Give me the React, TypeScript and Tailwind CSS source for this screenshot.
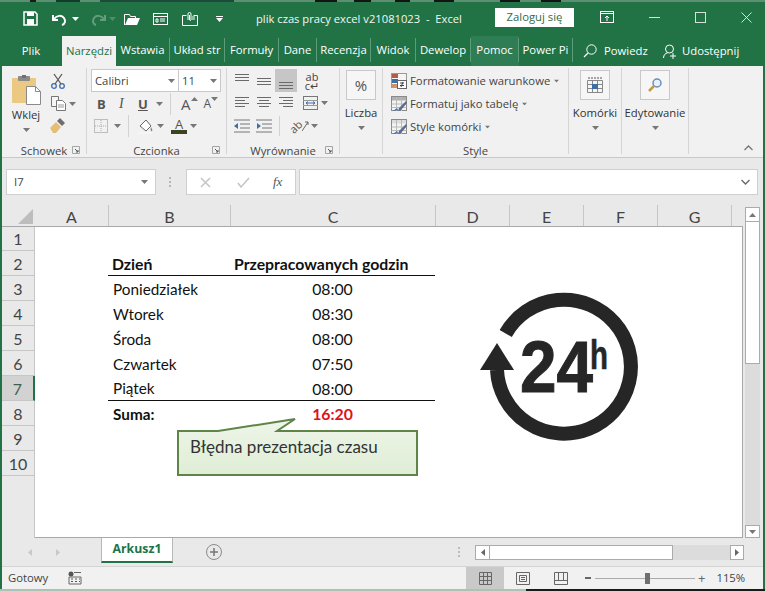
import type { ReactNode } from "react";

const ui = "font-['Open_Sans',sans-serif]";
const cell = "font-['Lato',sans-serif]";

function Caret({ className = "" }: { className?: string }) {
  return (
    <svg width="7" height="4" viewBox="0 0 7 4" className={className}>
      <path d="M0 0h7L3.5 4z" fill="#777" />
    </svg>
  );
}

function Ico({ w = 16, h = 16, children }: { w?: number; h?: number; children: ReactNode }) {
  return (
    <svg width={w} height={h} viewBox={`0 0 ${w} ${h}`} fill="none" className="shrink-0">
      {children}
    </svg>
  );
}

function Lines({ rows }: { rows: [number, number][] }) {
  return (
    <Ico w={16} h={14}>
      {rows.map(([x, w], i) => (
        <rect key={i} x={x} y={1 + i * 3} width={w} height="1" fill="#6a6a6a" />
      ))}
    </Ico>
  );
}

function Launcher() {
  return (
    <svg width="8" height="8" viewBox="0 0 8 8" fill="none">
      <path d="M0.5 0.5h7v7h-7z" stroke="#a5a5a5" />
      <path d="M3 3l3 3M6 4v2H4" stroke="#555" />
    </svg>
  );
}

function Sep({ className = "h-[22px]" }: { className?: string }) {
  return <div className={`w-px bg-[#d2d2d2] ${className}`} />;
}

function Group({ w, label, launcher, children }: { w: string; label?: string; launcher?: boolean; children: ReactNode }) {
  return (
    <div className={`${w} mt-[2px] mb-[3px] flex flex-col border-r border-[#d6d6d6]`}>
      <div className="min-h-0 flex-1">{children}</div>
      <div className="relative h-[14px] text-center text-[11.3px] leading-[21px] text-[#444]">
        {label}
        {launcher && (
          <span className="absolute top-[6px] right-[6px] flex">
            <Launcher />
          </span>
        )}
      </div>
    </div>
  );
}

function BigBox({ w, label, children }: { w: string; label: string; children: ReactNode }) {
  return (
    <Group w={w}>
      <div className="flex flex-col items-center pt-[2px]">
        <div className="flex size-[30px] items-center justify-center border border-[#c9c9c9] bg-[#f6f6f6]">{children}</div>
        <div className="mt-[5px] text-[11.3px] leading-[16px] whitespace-nowrap text-[#333]">{label}</div>
        <Caret className="mt-[5px]" />
      </div>
    </Group>
  );
}

function TableIcon({ top = "#b0b0b0" }: { top?: string }) {
  return (
    <Ico w={16} h={16}>
      <rect x="0.5" y="0.5" width="15" height="14" fill="#f4f4f4" stroke="#8a8a8a" />
      <rect x="1" y="1" width="14" height="3.5" fill={top} />
      <path d="M0.500 8h15M0.500 11.500h15M5.500 1v14M10.500 1v14" stroke="#b9b9b9" />
      <path d="M15 5L8 12l-1 3 3-1 6-7z" fill="#5b6c8c" />
      <path d="M2 15l4-3 1 2z" fill="#3f6fb5" />
    </Ico>
  );
}

function Clipboard() {
  return (
    <Ico w={30} h={30}>
      <rect x="1" y="3" width="24" height="25" rx="1" fill="#ecc982" />
      <rect x="7" y="1" width="12" height="5" rx="1" fill="#8a8a8a" />
      <rect x="11" y="0" width="4" height="3" fill="#707070" />
      <path d="M15.500 11.500h9l5 5v13h-14z" fill="#fff" stroke="#8a8a8a" />
      <path d="M24.500 11.500v5h5" stroke="#8a8a8a" />
    </Ico>
  );
}

function Scissors() {
  return (
    <Ico w={16} h={16}>
      <path d="M4 1l7 10M12 1L5 11" stroke="#5a5a5a" strokeWidth="1.300" />
      <circle cx="4" cy="13" r="2.300" stroke="#3d6ea8" strokeWidth="1.300" />
      <circle cx="12" cy="13" r="2.300" stroke="#3d6ea8" strokeWidth="1.300" />
    </Ico>
  );
}

function CopyIcon() {
  return (
    <Ico w={16} h={15}>
      <path d="M1.500 0.500h7v10h-7z" fill="#f6f6f6" stroke="#777" />
      <path d="M6.500 4.500h6l3 3v7h-9z" fill="#fff" stroke="#777" />
      <path d="M8 9h6M8 11h6" stroke="#999" />
    </Ico>
  );
}

function Painter() {
  return (
    <Ico w={16} h={15}>
      <path d="M0 10l6-6 5 5-5 6H3z" fill="#e5bd74" />
      <path d="M7 3l3-3 5 5-3 3z" fill="#6e6e6e" />
    </Ico>
  );
}

function Schowek() {
  return (
    <Group w="w-[85px]" label="Schowek" launcher>
      <div className="flex pt-[5px] pl-[9px]">
        <div className="flex w-[30px] flex-col items-center pt-[2px]">
          <Clipboard />
          <span className="text-[11.3px] leading-[20px] text-[#333]">Wklej</span>
          <Caret className="mt-[3px]" />
        </div>
        <div className="ml-[9px] flex flex-col gap-[7px]">
          <Scissors />
          <div className="flex items-center gap-[3px]">
            <CopyIcon />
            <Caret />
          </div>
          <Painter />
        </div>
      </div>
    </Group>
  );
}

function Czcionka() {
  return (
    <Group w="w-[140px]" label="Czcionka" launcher>
      <div className="flex flex-col pt-[1px] pl-[4px]">
        <div className="flex h-[23px] text-[11.3px] leading-[21px] text-[#444]">
          <div className="flex w-[88px] items-center justify-between border border-[#c9c9c9] bg-white px-[3px]">
            Calibri
            <Caret />
          </div>
          <div className="flex w-[42px] items-center justify-between border border-l-0 border-[#c9c9c9] bg-white px-[3px]">
            11
            <Caret />
          </div>
        </div>
        <div className="mt-[2px] flex h-[20px] items-center text-[#555]">
          <span className="w-[22px] pl-[6px] text-[13px] leading-none font-bold">B</span>
          <span className="w-[22px] pl-[6px] font-['Liberation_Serif',serif] text-[14px] leading-none italic">I</span>
          <span className="w-[16px] pl-[3px] text-[13px] leading-none font-bold underline">U</span>
          <Caret className="ml-[5px]" />
          <Sep className="ml-[7px] h-[22px]" />
          <span className="ml-[10px] text-[15px] leading-none">A</span>
          <Caret className="mb-[11px] rotate-180" />
          <span className="ml-[6px] text-[12px] leading-none">A</span>
          <Caret className="mb-[11px]" />
        </div>
        <div className="mt-[1px] flex h-[22px] items-center">
          <div className="ml-[3px]">
            <Ico w={14} h={14}>
              <rect x="0.500" y="0.500" width="13" height="13" stroke="#888" strokeDasharray="1 1" />
              <path d="M7 1v12M1 7h12" stroke="#aaa" strokeDasharray="1 1" />
            </Ico>
          </div>
          <Caret className="ml-[6px]" />
          <Sep className="ml-[7px] h-[22px]" />
          <div className="ml-[9px]">
            <Ico w={16} h={16}>
              <path d="M2 8l6-6 5 6-5 5z" fill="#fff" stroke="#666" />
              <path d="M13 9c1 2 2 3 1 4s-2-1-1-4z" fill="#888" />
              <path d="M0 14h14v2H0z" fill="#f5f5f5" />
            </Ico>
          </div>
          <Caret className="ml-[3px]" />
          <span className="ml-[7px] flex flex-col items-center text-[13px] leading-[12px] text-[#555]">
            A<span className="h-[4px] w-[16px] bg-[#3d4220]" />
          </span>
          <Caret className="ml-[3px]" />
        </div>
      </div>
    </Group>
  );
}

const full: [number, number][] = [
  [1, 14],
  [1, 14],
  [1, 14],
];

function Wyrownanie() {
  return (
    <Group w="w-[113px]" label="Wyrównanie" launcher>
      <div className="grid grid-cols-[22px_22px_22px_30px] grid-rows-[23px_22px_24px] items-center justify-items-center pt-[1px] pl-[4px]">
        <div className="self-start pt-[4px]">
          <Lines rows={full} />
        </div>
        <div className="self-start pt-[8px]">
          <Lines rows={full} />
        </div>
        <div className="flex h-[23px] w-[22px] items-start justify-center bg-[#c6c6c6] pt-[12px]">
          <Lines rows={full} />
        </div>
        <div className="pt-[1px] text-center text-[11px] leading-[9px] text-[#444]">
          ab
          <br />c↵
        </div>
        <Lines rows={[[1, 14], [1, 10], [1, 14], [1, 10]]} />
        <Lines rows={[[1, 14], [3, 10], [1, 14], [3, 10]]} />
        <Lines rows={[[1, 14], [5, 10], [1, 14], [5, 10]]} />
        <div className="flex items-center gap-[3px] justify-self-start pl-[6px]">
          <Ico w={15} h={14}>
            <rect x="0.500" y="0.500" width="14" height="13" stroke="#777" />
            <path d="M0 4.500h15M0 9.500h15" stroke="#999" />
            <path d="M3 7h9M3 7l2-1.500M3 7l2 1.500M12 7l-2-1.500M12 7l-2 1.500" stroke="#3d6ea8" />
          </Ico>
          <Caret />
        </div>
        <Ico w={16} h={14}>
          <path d="M6 5h10M6 9h10M0 1h16M0 13h16" stroke="#777" />
          <path d="M0 7l4-3v6z" fill="#3d6ea8" />
        </Ico>
        <Ico w={16} h={14}>
          <path d="M6 5h10M6 9h10M0 1h16M0 13h16" stroke="#777" />
          <path d="M5 7L1 4v6z" fill="#3d6ea8" />
        </Ico>
        <div className="flex items-center justify-self-start pl-[4px] [grid-column:3/5]">
          <Sep className="h-[20px]" />
          <span className="ml-[9px] -rotate-45 text-[11px] leading-none text-[#555]">ab</span>
          <Ico w={7} h={10}>
            <path d="M0 10L6 1M3 1h3v3" stroke="#666" />
          </Ico>
          <Caret className="ml-[2px]" />
        </div>
      </div>
    </Group>
  );
}

function Styl() {
  const rows: [string, ReactNode][] = [
    [
      "Formatowanie warunkowe",
      <Ico key="a" w={16} h={16}>
        <rect x="0.500" y="0.500" width="15" height="14" fill="#f4f4f4" stroke="#999" />
        <rect x="1" y="1" width="6" height="4" fill="#b45a46" />
        <rect x="1" y="6" width="6" height="4" fill="#3d6ea8" />
        <rect x="1" y="11" width="6" height="4" fill="#d28f6d" />
        <rect x="6.500" y="7.500" width="9" height="8" fill="#fff" stroke="#666" />
        <path d="M9 10h4M9 12.500h4M10 14l2-5" stroke="#444" />
      </Ico>,
    ],
    ["Formatuj jako tabelę", <TableIcon key="b" />],
    ["Style komórki", <TableIcon key="c" top="#dcdcdc" />],
  ];
  return (
    <Group w="w-[186px]" label="Style">
      <div className="flex flex-col gap-[7px] pt-[5px] pl-[8px]">
        {rows.map(([t, icon]) => (
          <div key={t} className="flex h-[16px] items-center gap-[3px] text-[11.3px] leading-none whitespace-nowrap text-[#444]">
            {icon}
            <span>{t}</span>
            <Caret className="scale-75" />
          </div>
        ))}
      </div>
    </Group>
  );
}

const tabs: [string, string][] = [
  ["Wstawia", "w-[54px]"],
  ["Układ str", "w-[55px]"],
  ["Formuły", "w-[54px]"],
  ["Dane", "w-[38px]"],
  ["Recenzja", "w-[54px]"],
  ["Widok", "w-[45px]"],
  ["Dewelop", "w-[55px]"],
];

function TitleBar() {
  return (
    <div className="flex h-[30px] items-center text-white">
      <div className="flex items-center pt-[4px]">
        <div className="ml-[23px]">
          <Ico w={15} h={15}>
            <path d="M1 1h11l2 2v11H1z" stroke="#fff" strokeWidth="1.500" />
            <rect x="4" y="1" width="7" height="4" fill="#fff" />
            <rect x="4" y="8" width="7" height="6" fill="#fff" />
          </Ico>
        </div>
        <div className="ml-[14px]">
          <Ico w={16} h={14}>
            <path d="M1 3v5h5M2 7c3-4 8-4 10-1s1 6-2 7" stroke="#fff" strokeWidth="2" />
          </Ico>
        </div>
        <Caret className="ml-[4px] brightness-[3]" />
        <div className="ml-[11px] opacity-30">
          <Ico w={16} h={14}>
            <path d="M15 3v5h-5M14 7c-3-4-8-4-10-1s-1 6 2 7" stroke="#fff" strokeWidth="2" />
          </Ico>
        </div>
        <Caret className="ml-[3px] opacity-20 brightness-[3]" />
        <div className="ml-[8px]">
          <Ico w={16} h={14}>
            <path d="M0.500 13V2.500h5l1 2h5v2" stroke="#fff" />
            <path d="M1 13l3-7h12l-3 7z" fill="#fff" />
          </Ico>
        </div>
        <div className="ml-[13px]">
          <Ico w={15} h={14}>
            <rect x="0.500" y="1.500" width="14" height="11" stroke="#fff" />
            <path d="M1 4.500h13M3 7h2v3H3zM7 7h5M7 9h5" stroke="#fff" />
          </Ico>
        </div>
        <div className="ml-[14px]">
          <Ico w={16} h={16}>
            <path d="M0.500 4.500h4M11.500 4.500h4v10H0.500v-10" stroke="#fff" />
            <path d="M6 9V3a1.500 1.500 0 0 1 3 0v6a1 1 0 0 1-1.500 0V4" stroke="#fff" />
            <path d="M10 6h3M10 8h3" stroke="#fff" />
          </Ico>
        </div>
        <div className="ml-[18px] flex flex-col gap-[1px]">
          <span className="h-px w-[7px] bg-white" />
          <svg width="7" height="4" viewBox="0 0 7 4">
            <path d="M0 0h7L3.500 4z" fill="#fff" />
          </svg>
        </div>
        <div className="ml-[33px] w-[233px] text-[11.2px] whitespace-pre text-[#f1f7f3]">plik czas pracy excel v21081023  -  Excel</div>
      </div>
      <div className="ml-[6px] flex h-[19px] w-[79px] items-center justify-center bg-white text-[11.3px] text-[#2f6b4c]">Zaloguj się</div>
      <div className="ml-[26px]">
        <Ico w={14} h={12}>
          <rect x="0.500" y="0.500" width="13" height="11" stroke="#fff" />
          <path d="M1 2.500h12M7 10V5M5 7l2-2 2 2" stroke="#fff" />
        </Ico>
      </div>
      <span className="ml-[35px] h-px w-[11px] bg-white/80" />
      <span className="ml-[35px] size-[11px] border border-white/80" />
      <div className="ml-[35px]">
        <Ico w={11} h={11}>
          <path d="M0.500 0.500l10 10M10.500 0.500l-10 10" stroke="#fff" strokeOpacity=".8" />
        </Ico>
      </div>
    </div>
  );
}

function TabRow() {
  return (
    <div className="flex h-[34px] text-[11.3px] whitespace-nowrap text-white">
      <div className="flex w-[62px] items-center justify-center pt-[4px]">Plik</div>
      <div className="flex h-[30px] w-[54px] items-center justify-center self-end bg-[#f1f1f1] text-[#217346]">Narzędzi</div>
      {tabs.map(([t, w]) => (
        <div key={t} className={`${w} flex items-center justify-center pt-[6px] pb-[4px]`}>
          <span className="flex h-[24px] w-full items-center justify-center border-r border-[#5d9c7b]">{t}</span>
        </div>
      ))}
      <div className="flex h-[30px] w-[48px] items-start justify-center self-end bg-[#2f7d54] pt-[2px]">
        <span className="flex h-[24px] w-full items-center justify-center border-r border-[#5d9c7b]">Pomoc</span>
      </div>
      <div className="flex w-[54px] items-center justify-center pt-[6px] pb-[4px]">
        <span className="flex h-[24px] w-full items-center justify-center border-r border-[#5d9c7b]">Power Pi</span>
      </div>
      <div className="flex items-center pt-[4px]">
        <div className="ml-[10px]">
          <Ico w={14} h={14}>
            <circle cx="8.500" cy="5.500" r="4.700" stroke="#fff" />
            <path d="M5 9l-4 4" stroke="#fff" strokeWidth="1.300" />
          </Ico>
        </div>
        <span className="ml-[7px] w-[45px]">Powiedz</span>
        <div className="ml-[14px]">
          <Ico w={15} h={15}>
            <circle cx="6.500" cy="5" r="4" stroke="#fff" />
            <path d="M0.500 14c0-3 2-5 4-5M10 9v6M7 12h6" stroke="#fff" />
          </Ico>
        </div>
        <span className="ml-[4px]">Udostępnij</span>
      </div>
    </div>
  );
}

function Ribbon() {
  return (
    <div className={`flex h-[92px] border-b border-[#c8c8c8] bg-[#f1f1f1] ${ui}`}>
      <Schowek />
      <Czcionka />
      <Wyrownanie />
      <BigBox w="w-[43px]" label="Liczba">
        <span className="text-[15px] leading-none text-[#555]">%</span>
      </BigBox>
      <Styl />
      <BigBox w="w-[53px]" label="Komórki">
        <Ico w={16} h={16}>
          <path d="M0.500 3.500h15v12H0.500zM0.500 7.500h15M0.500 11.500h15M5.500 3.500v12M10.500 3.500v12" stroke="#888" />
          <rect x="5" y="7" width="6" height="5" fill="#3d6ea8" />
          <path d="M1 1h14" stroke="#555" strokeDasharray="2 1" />
        </Ico>
      </BigBox>
      <BigBox w="w-[67px]" label="Edytowanie">
        <Ico w={16} h={16}>
          <circle cx="10" cy="6" r="4" fill="#e8f0f8" stroke="#6a8fb5" strokeWidth="1.500" />
          <path d="M7 9l-5 5" stroke="#c19a49" strokeWidth="2.500" />
        </Ico>
      </BigBox>
      <div className="flex flex-1 items-end justify-end pr-[10px] pb-[6px]">
        <svg width="9" height="6" viewBox="0 0 9 6" fill="none">
          <path d="M0.500 5L4.500 1l4 4" stroke="#777" strokeWidth="1.300" />
        </svg>
      </div>
    </div>
  );
}

function FormulaBar() {
  return (
    <div className="flex h-[47px] items-start bg-[#e9e9e9] pt-[11px] pl-[4px]">
      <div className={`flex h-[26px] w-[150px] items-center justify-between border border-[#cfcfcf] bg-white px-[7px] text-[11.3px] text-[#444] ${ui}`}>
        I7
        <Caret />
      </div>
      <div className="ml-[10px] flex h-[26px] w-[8px] flex-col items-center justify-center gap-[2px]">
        <span className="size-[2px] bg-[#b5b5b5]" />
        <span className="size-[2px] bg-[#b5b5b5]" />
        <span className="size-[2px] bg-[#b5b5b5]" />
      </div>
      <div className="ml-[12px] flex h-[26px] w-[110px] items-center border border-[#cfcfcf] bg-white pl-[13px]">
        <Ico w={11} h={11}>
          <path d="M1 1l9 9M10 1l-9 9" stroke="#c4c4c4" strokeWidth="1.500" />
        </Ico>
        <div className="ml-[26px]">
          <Ico w={13} h={11}>
            <path d="M1 6l3 4 8-9" stroke="#c4c4c4" strokeWidth="1.500" />
          </Ico>
        </div>
        <span className="ml-[23px] font-['Liberation_Serif',serif] text-[13px] text-[#555] italic">fx</span>
      </div>
      <div className="ml-[3px] flex h-[26px] w-[459px] items-center justify-end border border-[#cfcfcf] bg-white pr-[7px]">
        <svg width="9" height="6" viewBox="0 0 9 6" fill="none">
          <path d="M0.500 1l4 4 4-4" stroke="#666" strokeWidth="1.300" />
        </svg>
      </div>
    </div>
  );
}

const colHeads: [string, string][] = [
  ["A", "w-[74px]"],
  ["B", "w-[122px]"],
  ["C", "w-[205px]"],
  ["D", "w-[74px]"],
  ["E", "w-[74px]"],
  ["F", "w-[74px]"],
  ["G", "w-[74px]"],
];

const days: [string, string][] = [
  ["Poniedziałek", "08:00"],
  ["Wtorek", "08:30"],
  ["Środa", "08:00"],
  ["Czwartek", "07:50"],
  ["Piątek", "08:00"],
];

function Row({ day, time, className = "", timeClass = "" }: { day: string; time: string; className?: string; timeClass?: string }) {
  return (
    <div className={`ml-[73px] flex h-[25px] w-[327px] items-center pt-[1px] text-[15.3px] text-[#111] ${className}`}>
      <span className="w-[122px] pl-[5px]">{day}</span>
      <span className={`w-[205px] text-center text-[15.8px] ${timeClass}`}>{time}</span>
    </div>
  );
}

function Logo() {
  return (
    <svg width="170" height="160" viewBox="0 0 170 160" className="absolute top-[63px] left-[443px]" fill="#262626">
      <path d="M19 80 A67 67 0 1 0 27.700 43.500" fill="none" stroke="#262626" strokeWidth="14" />
      <path d="M19 53L36 80H2z" />
      <text x="42" y="102" fontFamily="Liberation Sans" fontWeight="700" fontSize="72" textLength="73" lengthAdjust="spacingAndGlyphs" stroke="#262626" strokeWidth="1">
        24
      </text>
      <text x="112" y="79" fontFamily="Liberation Sans" fontWeight="700" fontSize="40" textLength="18" lengthAdjust="spacingAndGlyphs" stroke="#262626" strokeWidth="0.600">
        h
      </text>
    </svg>
  );
}

function Callout() {
  return (
    <div className="absolute top-[191px] left-[142px] h-[58px] w-[241px] text-[#333]">
      <svg width="241" height="58" viewBox="0 0 241 58" className="absolute inset-0">
        <defs>
          <linearGradient id="cg" x1="0" x2="0" y1="0" y2="1">
            <stop offset="0" stopColor="#eef5e8" />
            <stop offset="1" stopColor="#dfeed5" />
          </linearGradient>
        </defs>
        <path d="M1 13H41L118 1L100 13H240V57H1z" fill="url(#cg)" stroke="#5f8448" strokeWidth="2" />
      </svg>
      <span className={`absolute top-[19px] left-[13px] text-[17px] leading-[20px] whitespace-nowrap ${cell}`}>Błędna prezentacja czasu</span>
    </div>
  );
}

function RowHead({ n, h = "h-[25px]" }: { n: number; h?: string }) {
  return <div className={`${h} flex items-center justify-center border-r border-b border-[#c6c6c6] pt-[1px] text-[16px] text-[#444]`}>{n}</div>;
}

function Sheet() {
  return (
    <div className={`flex h-[333px] bg-[#e9e9e9] ${cell}`}>
      <div className="w-[33px] shrink-0">
        <div className="flex h-[22px] items-end justify-end border-b border-[#a8a8a8] pr-[2px] pb-[2px]">
          <svg width="15" height="15" viewBox="0 0 15 15">
            <path d="M15 0v15H0z" fill="#bdbdbd" />
          </svg>
        </div>
        <RowHead n={1} h="h-[24px]" />
        {[2, 3, 4, 5, 6].map((n) => (
          <RowHead key={n} n={n} />
        ))}
        <div className="flex h-[25px] items-center justify-center border-r-2 border-b border-r-[#217346] border-b-[#c6c6c6] bg-[#d2d2d2] pt-[1px] text-[16px] text-[#3f5f4f]">7</div>
        {[8, 9, 10].map((n) => (
          <RowHead key={n} n={n} />
        ))}
        <div className="h-[62px] border-r border-[#c6c6c6]" />
      </div>
      <div className="w-[708px] shrink-0">
        <div className="flex h-[22px] border-b border-[#a8a8a8] text-[16px] leading-[24px] text-[#444]">
          {colHeads.map(([c, w]) => (
            <div key={c} className={`${w} border-r border-[#c6c6c6] text-center`}>
              {c}
            </div>
          ))}
        </div>
        <div className="relative h-[311px] overflow-hidden border-r border-b border-[#a8a8a8] bg-white">
          <div className="h-[24px]" />
          <div className="ml-[73px] flex h-[25px] w-[327px] items-center border-b border-[#111] pt-[1px] text-[15.8px] font-bold whitespace-nowrap text-[#111]">
            <span className="w-[122px] pl-[4px]">Dzień</span>
            <span className="w-[205px] pl-[4px]">Przepracowanych godzin</span>
          </div>
          {days.map(([d, t], i) => (
            <Row key={d} day={d} time={t} className={i === 4 ? "border-b border-[#111]" : ""} />
          ))}
          <Row day="Suma:" time="16:20" className="font-bold" timeClass="text-[#e0101a]" />
          <Logo />
          <Callout />
        </div>
      </div>
      <div className="ml-[2px] flex w-[15px] flex-col">
        <div className="h-[2px]" />
        <div className="flex h-[15px] items-center justify-center border border-[#ababab] bg-white">
          <svg width="7" height="4" viewBox="0 0 7 4" className="rotate-180">
            <path d="M0 0h7L3.500 4z" fill="#777" />
          </svg>
        </div>
        <div className="h-[142px] border border-t-0 border-[#ababab] bg-white" />
        <div className="flex-1 bg-[#dcdcdc]" />
        <div className="flex h-[13px] items-center justify-center border border-[#ababab] bg-white">
          <Caret />
        </div>
      </div>
    </div>
  );
}

function TabStrip() {
  return (
    <div className={`flex h-[28px] items-start bg-[#e9e9e9] ${ui}`}>
      <div className="ml-[26px] flex h-[28px] items-center gap-[24px]">
        <svg width="4" height="7" viewBox="0 0 4 7">
          <path d="M4 0v7L0 3.500z" fill="#c8c8c8" />
        </svg>
        <svg width="4" height="7" viewBox="0 0 4 7">
          <path d="M0 0v7l4-3.500z" fill="#c8c8c8" />
        </svg>
      </div>
      <div className="ml-[41px] flex h-[25px] w-[72px] items-center justify-center border-x border-b-2 border-[#b7b7b7] border-b-[#217346] bg-white text-[12.300px] font-bold text-[#217346]">
        Arkusz1
      </div>
      <div className="mt-[6px] ml-[33px] flex size-[16px] items-center justify-center rounded-full border border-[#8c8c8c]">
        <svg width="8" height="8" viewBox="0 0 8 8">
          <path d="M4 0v8M0 4h8" stroke="#777" strokeWidth="1.500" />
        </svg>
      </div>
      <div className="ml-[233px] flex h-[28px] w-[8px] flex-col items-center justify-center gap-[2px]">
        <span className="size-[2px] bg-[#bdbdbd]" />
        <span className="size-[2px] bg-[#bdbdbd]" />
        <span className="size-[2px] bg-[#bdbdbd]" />
      </div>
      <div className="mt-[7px] ml-[12px] flex h-[15px] w-[198px] border border-[#ababab] bg-white">
        <div className="flex w-[14px] items-center justify-center border-r border-[#ababab]">
          <svg width="4" height="7" viewBox="0 0 4 7">
            <path d="M4 0v7L0 3.500z" fill="#666" />
          </svg>
        </div>
      </div>
      <div className="mt-[7px] h-[15px] w-[57px] bg-[#dcdcdc]" />
      <div className="mt-[7px] flex h-[15px] w-[14px] items-center justify-center border border-[#ababab] bg-white">
        <svg width="4" height="7" viewBox="0 0 4 7">
          <path d="M0 0v7l4-3.500z" fill="#666" />
        </svg>
      </div>
    </div>
  );
}

function StatusBar() {
  return (
    <div className={`flex h-[23px] items-center border-t border-[#d4d4d4] bg-[#f1f1f1] pl-[6px] text-[11.3px] text-[#444] ${ui}`}>
      <span className="w-[60px]">Gotowy</span>
      <Ico w={14} h={14}>
        <circle cx="3" cy="3" r="2.500" fill="#555" />
        <path d="M6 1.500h7M1 6h12v7H1z" stroke="#666" />
        <path d="M3 8h2M7 8h2M11 8h1M3 10.500h2M7 10.500h2M11 10.500h1" stroke="#555" />
      </Ico>
      <div className="ml-[384px] flex h-[22px] w-[38px] items-center justify-center bg-[#c9c9c9]">
        <Ico w={13} h={13}>
          <path d="M0.500 0.500h12v12h-12zM4.500 0.500v12M8.500 0.500v12M0.500 4.500h12M0.500 8.500h12" stroke="#666" />
        </Ico>
      </div>
      <div className="ml-[12px]">
        <Ico w={14} h={13}>
          <path d="M0.500 0.500h13v12h-13z" stroke="#666" />
          <path d="M3.500 3.500h7v6h-7zM5 5.500h4M5 7.500h4" stroke="#666" />
        </Ico>
      </div>
      <div className="ml-[24px]">
        <Ico w={14} h={13}>
          <path d="M0.500 0.500h13v12h-13zM0.500 8.500h13M4.500 0.500v8M9.500 0.500v8" stroke="#666" />
        </Ico>
      </div>
      <div className="ml-[17px] flex items-center">
        <span className="h-[2px] w-[6px] bg-[#666]" />
        <div className="ml-[4px] flex h-px w-[100px] items-center bg-[#aaa]">
          <span className="ml-[50px] h-[11px] w-[5px] bg-[#6e6e6e]" />
        </div>
        <span className="ml-[3px] text-[13px] leading-none text-[#666]">+</span>
      </div>
      <span className="ml-[11px]">115%</span>
    </div>
  );
}

function TopStrip() {
  return (
    <div className="flex h-[2px] bg-[#5d8f73]">
      <span className="ml-[30px] w-[6px] bg-[#1a1a1a]" />
      <span className="ml-[20px] w-[24px] bg-[#123b2c]" />
      <span className="ml-[20px] w-[134px] bg-[#1d4a3a]" />
      <span className="ml-[81px] w-[22px] bg-[#141414]" />
      <span className="ml-[17px] w-[17px] bg-[#141414]" />
      <span className="ml-[24px] w-[15px] bg-[#141414]" />
      <span className="ml-[24px] w-[20px] bg-[#141414]" />
      <span className="ml-[46px] w-[20px] bg-[#141414]" />
      <span className="ml-[21px] w-[20px] bg-[#141414]" />
    </div>
  );
}

export default function App() {
  return (
    <div className="h-[591px] w-[765px] overflow-hidden bg-[#217346]">
      <TopStrip />
      <div className={ui}>
        <TitleBar />
        <TabRow />
      </div>
      <div className="mx-[2px]">
        <Ribbon />
        <FormulaBar />
        <Sheet />
        <TabStrip />
        <StatusBar />
      </div>
      <div className="flex h-[2px]">
        <div className="w-[526px] bg-[#a9c4b4]" />
        <div className="flex-1 bg-[#1a1a1a]" />
      </div>
    </div>
  );
}
